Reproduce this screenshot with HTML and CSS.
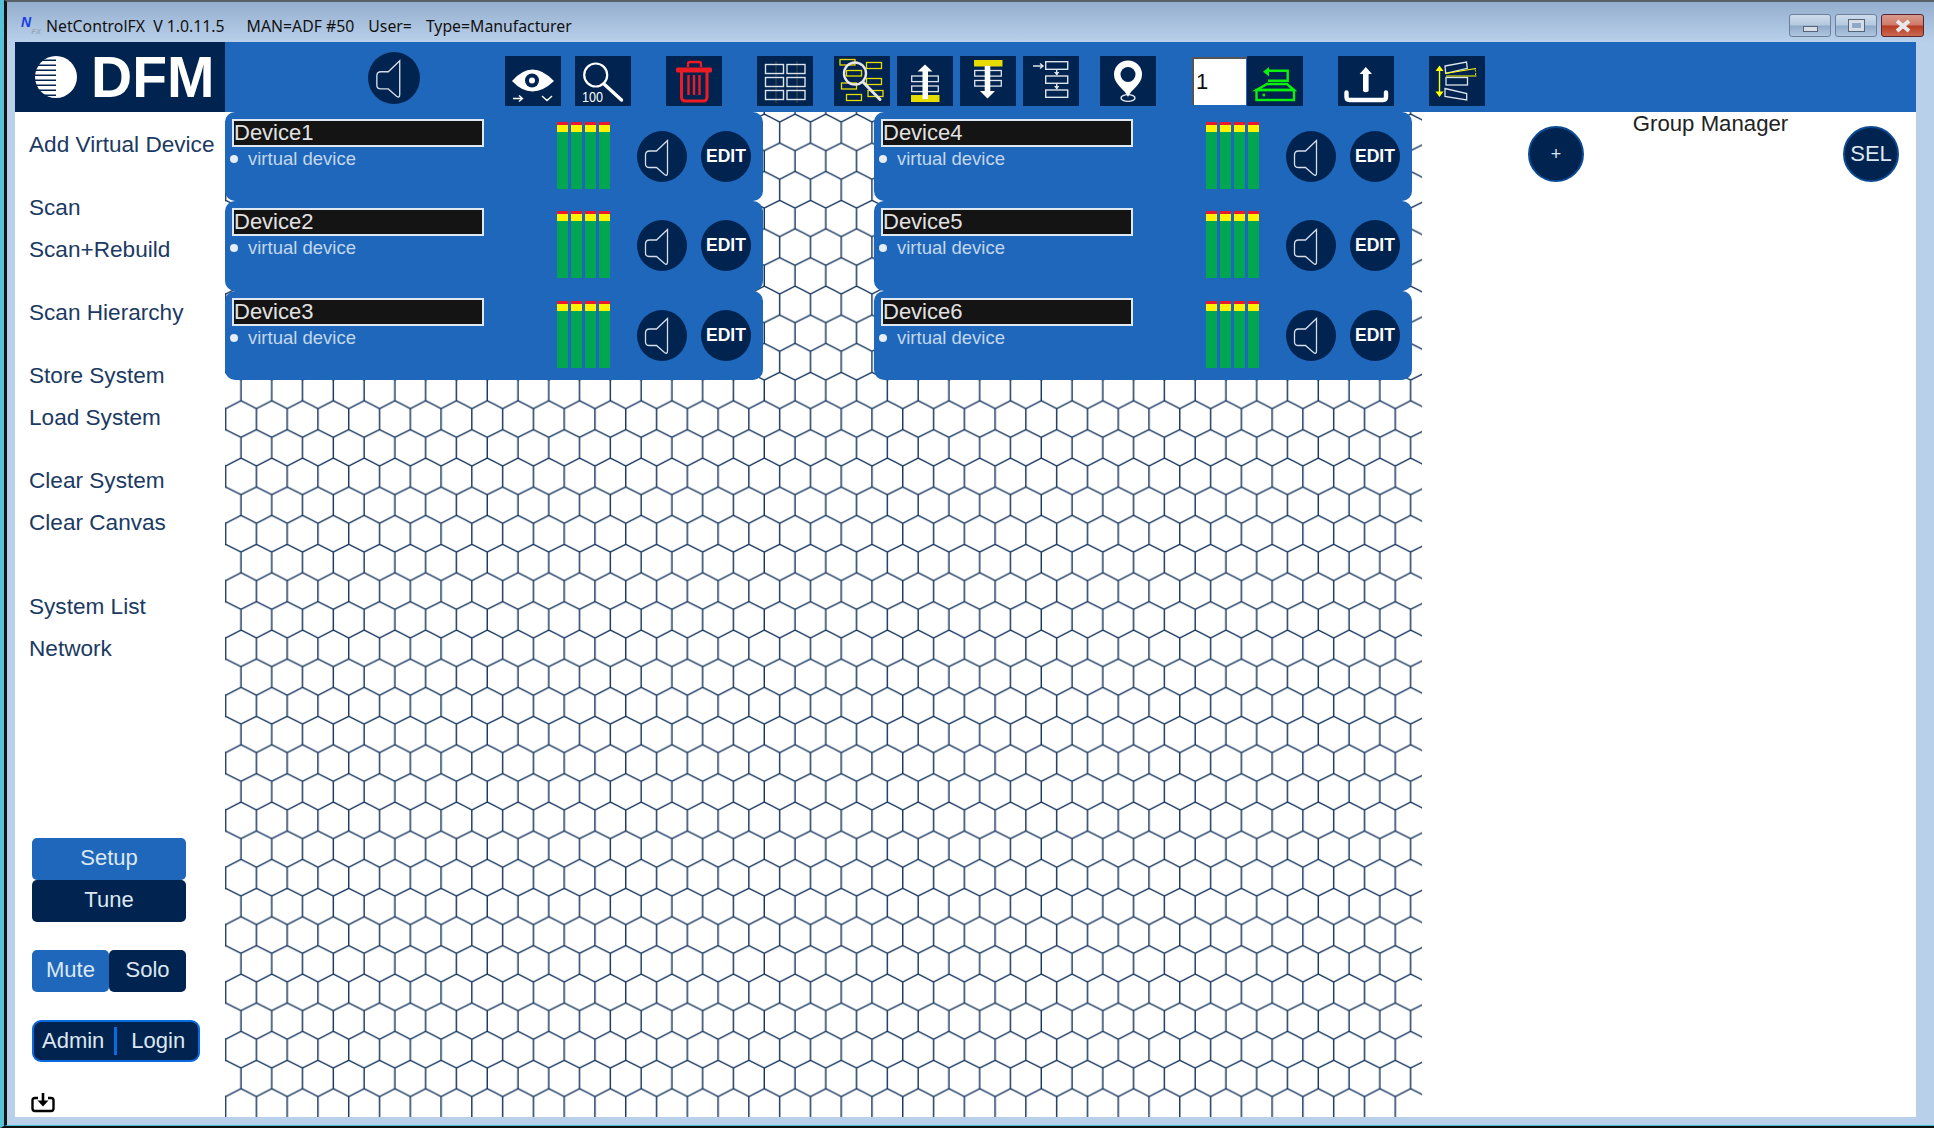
FILE: index.html
```html
<!DOCTYPE html>
<html lang="en">
<head>
  <meta charset="UTF-8" />
  <title>NetControlFX</title>
  <link rel="stylesheet" href="styles.css">
</head>
<body>
  <!-- shared icon shapes -->
  <svg class="defs" width="0" height="0">
    <symbol id="speaker" viewBox="0 0 50 50">
      <path d="M30.5 8.5 L19.5 19 H12.5 Q8.5 19 8.5 23 V32 Q8.5 35.5 12.5 35.5 H19.5 L27.5 42.5 Q30.5 44.5 30.5 41 Z" fill="none" stroke="#d5deea" stroke-width="1.3" />
    </symbol>
    <symbol id="meter" viewBox="0 0 11 67">
      <rect width="11" height="3" fill="#e8192c" />
      <rect y="3" width="11" height="7" fill="#fff200" />
      <rect y="10" width="11" height="57" fill="#00a651" />
    </symbol>
  </svg>

  <div class="window">
    <!-- Title bar -->
    <div class="titlebar">
      <div class="title">
        <svg class="appicon" width="21" height="22" viewBox="0 0 21 22">
          <text x="0" y="13" class="appicon-n">N</text>
          <text x="10.5" y="20" class="appicon-fx">FX</text>
        </svg>
        <span class="t1">NetControlFX&nbsp; V 1.0.11.5</span>
        <span class="t2">MAN=ADF #50</span>
        <span class="t3">User=</span>
        <span class="t3">Type=Manufacturer</span>
      </div>
      <div class="winbtns">
        <div class="winbtn"><span class="ico-min"></span></div>
        <div class="winbtn"><span class="ico-max"></span></div>
        <div class="winbtn close"><svg width="22" height="14" viewBox="0 0 22 14"><path d="M5 2 L17 12 M17 2 L5 12" stroke="#e8e8ea" stroke-width="4" /></svg></div>
      </div>
    </div>

    <div class="main">
      <!-- Toolbar -->
      <div class="toolbar">
        <div class="logo">
          <svg width="44" height="44" viewBox="0 0 44 44">
            <clipPath id="disc"><circle cx="22" cy="22" r="21" /></clipPath>
            <g clip-path="url(#disc)" fill="#fff">
              <rect x="22" y="0" width="22" height="44" />
              <rect x="0" y="1" width="22" height="3.5" />
              <rect x="0" y="6" width="22" height="3.5" />
              <rect x="0" y="11" width="22" height="3.5" />
              <rect x="0" y="16" width="22" height="3.5" />
              <rect x="0" y="21" width="22" height="3.5" />
              <rect x="0" y="26" width="22" height="3.5" />
              <rect x="0" y="31" width="22" height="3.5" />
              <rect x="0" y="36" width="22" height="3.5" />
              <rect x="0" y="41" width="22" height="3" />
            </g>
          </svg>
          <span class="logo-text">DFM</span>
        </div>
        <div class="round top-speaker"><svg width="52" height="52"><use href="#speaker" /></svg></div>

        <!-- eye -->
        <div class="tool first">
          <svg width="56" height="50" viewBox="0 0 56 50">
            <path d="M7 25 Q27 2 49 25 Q27 46 7 25 Z" fill="#fff" />
            <circle cx="27" cy="24.5" r="7" fill="#00234f" />
            <circle cx="27" cy="24.5" r="3" fill="#fff" />
            <path d="M8 42.5 H17 M14 39.5 L17.5 42.5 L14 45.5 M37 40 L42 44.5 L47 40" fill="none" stroke="#fff" stroke-width="1.4" />
          </svg>
        </div>
        <!-- search 100 -->
        <div class="tool g14">
          <svg width="56" height="50" viewBox="0 0 56 50">
            <circle cx="20.7" cy="19" r="11.5" fill="none" stroke="#fff" stroke-width="2.2" />
            <path d="M29 28 L46.5 44" stroke="#fff" stroke-width="3.4" stroke-linecap="round" />
            <text x="7" y="46" class="tool-num" textLength="21" lengthAdjust="spacingAndGlyphs">100</text>
          </svg>
        </div>
        <!-- trash -->
        <div class="tool g35">
          <svg width="56" height="50" viewBox="0 0 56 50">
            <path d="M22 11 V8 Q22 6 24 6 H33 Q35 6 35 8 V11" fill="none" stroke="#ed1c24" stroke-width="2.4" />
            <rect x="10" y="11.5" width="36" height="5" rx="1.5" fill="#ed1c24" />
            <path d="M15.5 16 V41 Q15.5 45 19.5 45 H37 Q41 45 41 41 V16" fill="none" stroke="#ed1c24" stroke-width="3" />
            <path d="M22.5 19 V39 M28 19 V39 M33.5 19 V39" stroke="#ed1c24" stroke-width="2.4" />
          </svg>
        </div>
        <!-- grid -->
        <div class="tool g35">
          <svg width="56" height="50" viewBox="0 0 56 50">
            <path d="M19 5 V47 M40 5 V47" stroke="#4a4a48" stroke-width="1" />
            <g fill="none" stroke="#dde3ea" stroke-width="1.4">
              <rect x="8.5" y="8.5" width="18" height="9" />
              <rect x="30" y="8.5" width="18" height="9" />
              <rect x="8.5" y="21.5" width="18" height="9" />
              <rect x="30" y="21.5" width="18" height="9" />
              <rect x="8.5" y="34.5" width="18" height="9" />
              <rect x="30" y="34.5" width="18" height="9" />
            </g>
          </svg>
        </div>
        <!-- find in yellow blocks -->
        <div class="tool g21">
          <svg width="56" height="50" viewBox="0 0 56 50">
            <g fill="none" stroke="#e6dc00" stroke-width="1.3">
              <rect x="6" y="3.5" width="15" height="5.5" />
              <rect x="32.5" y="6.5" width="15" height="6" />
              <rect x="12.5" y="14.5" width="15" height="5.5" />
              <rect x="32.5" y="22.5" width="15" height="6" />
              <rect x="7.5" y="27" width="15" height="6" />
              <rect x="34" y="34.5" width="15" height="6" />
              <rect x="12.5" y="38.5" width="15" height="6" />
            </g>
            <circle cx="21" cy="17.5" r="11" fill="none" stroke="#e6e6e6" stroke-width="2.4" />
            <path d="M29 26 L46 43.5" stroke="#e6e6e6" stroke-width="3" stroke-linecap="round" />
          </svg>
        </div>
        <!-- move up -->
        <div class="tool g7">
          <svg width="56" height="50" viewBox="0 0 56 50">
            <rect x="14" y="39" width="28.5" height="7" fill="#e6dc00" />
            <rect x="14.7" y="20" width="26.6" height="5.6" fill="none" stroke="#dde3ea" stroke-width="1.3" />
            <rect x="14.7" y="30" width="26.6" height="5.6" fill="none" stroke="#dde3ea" stroke-width="1.3" />
            <path d="M28 8.5 L35.5 15.5 H31 V43 H25.5 V15.5 H20.5 Z" fill="#fff" />
          </svg>
        </div>
        <!-- move down -->
        <div class="tool g7">
          <svg width="56" height="50" viewBox="0 0 56 50">
            <rect x="14" y="4" width="28.5" height="6.5" fill="#e6dc00" />
            <rect x="14.7" y="14.5" width="26.6" height="5.6" fill="none" stroke="#dde3ea" stroke-width="1.3" />
            <rect x="14.7" y="24.5" width="26.6" height="5.6" fill="none" stroke="#dde3ea" stroke-width="1.3" />
            <path d="M27.5 42.5 L20 35 H24.7 V10 H30.3 V35 H35 Z" fill="#fff" />
          </svg>
        </div>
        <!-- flow -->
        <div class="tool g7">
          <svg width="56" height="50" viewBox="0 0 56 50">
            <g fill="none" stroke="#dde3ea" stroke-width="1.4">
              <rect x="22.7" y="5.7" width="22" height="7.6" />
              <rect x="22.7" y="20" width="22" height="7.3" />
              <rect x="22.7" y="34" width="22" height="7.3" />
              <path d="M10 10 H20 M17 7.5 L20 10 L17 12.5" />
              <path d="M33.7 13.5 V19 M33.7 27.5 V33" />
            </g>
            <path d="M31 16 H36.4 L33.7 19.5 Z M31 30 H36.4 L33.7 33.5 Z" fill="#dde3ea" />
          </svg>
        </div>
        <!-- pin -->
        <div class="tool g21">
          <svg width="56" height="50" viewBox="0 0 56 50">
            <ellipse cx="28" cy="42" rx="7" ry="3.4" fill="none" stroke="#e8ecf2" stroke-width="1.4" />
            <path d="M28 41 C25 33 14 29 14 18.5 A14 14 0 0 1 42 18.5 C42 29 31 33 28 41 Z" fill="#fff" />
            <circle cx="28" cy="18.5" r="7.5" fill="#00234f" />
          </svg>
        </div>
        <div class="group-num">1</div>
        <!-- green return -->
        <div class="tool g1">
          <svg width="56" height="50" viewBox="0 0 56 50">
            <g fill="none" stroke="#0df00d" stroke-width="2.4">
              <path d="M20 14.7 H40.7 V24.7 H21" />
              <path d="M20 28 H40 L47 34 H9.5 Z" />
              <rect x="9.5" y="34" width="37.5" height="10" />
            </g>
            <path d="M16 15.7 L22 11 V20.5 Z" fill="#0df00d" />
            <rect x="15.5" y="37.7" width="2.6" height="2.6" fill="#0df00d" />
          </svg>
        </div>
        <!-- upload -->
        <div class="tool g35">
          <svg width="56" height="50" viewBox="0 0 56 50">
            <path d="M27.8 11 L34 18 H30.6 V35 Q27.8 37.5 25 35 V18 H21.6 Z" fill="#fff" />
            <path d="M8.5 36.5 V41 Q8.5 44 11.5 44 H45 Q48 44 48 41 V36.5" fill="none" stroke="#fff" stroke-width="4.4" stroke-linecap="round" />
          </svg>
        </div>
        <!-- arrange -->
        <div class="tool g35">
          <svg width="56" height="50" viewBox="0 0 56 50">
            <path d="M10.5 13 V37" stroke="#ffff00" stroke-width="1.4" />
            <path d="M10.5 9.5 L14.5 15 H6.5 Z M10.5 41 L14.5 35.5 H6.5 Z" fill="#ffff00" />
            <g fill="none" stroke="#dde3ea" stroke-width="1.3">
              <path d="M16 10 L37.5 6 L38.3 12.3 L16.7 17.5 Z" />
              <rect x="17" y="21.5" width="21.5" height="7.5" />
              <path d="M16 32.5 L37.7 37.5 V44 L16 40.5 Z" />
            </g>
            <path d="M16 17.5 L47 12.5 M17 20 H47.5" stroke="#ffff00" stroke-width="1.2" />
            <path d="M46 13.5 Q47.5 17 46 20" fill="none" stroke="#ffff00" stroke-width="1" stroke-dasharray="2 1.5" />
          </svg>
        </div>
      </div>

      <div class="content">
        <!-- Side menu -->
        <div class="sidebar">
          <div class="menu">
            <div class="item">Add Virtual Device</div>
            <div class="item sep">Scan</div>
            <div class="item">Scan+Rebuild</div>
            <div class="item sep">Scan Hierarchy</div>
            <div class="item sep">Store System</div>
            <div class="item">Load System</div>
            <div class="item sep">Clear System</div>
            <div class="item">Clear Canvas</div>
            <div class="item sep-big">System List</div>
            <div class="item">Network</div>
          </div>
          <div class="controls">
            <div class="btn wide blue">Setup</div>
            <div class="btn wide dark">Tune</div>
            <div class="pair">
              <div class="btn half blue">Mute</div>
              <div class="btn half dark">Solo</div>
            </div>
            <div class="admin">
              <span>Admin</span>
              <span class="divider"></span>
              <span>Login</span>
            </div>
            <svg class="saveicon" width="24" height="21" viewBox="0 0 24 21">
              <path d="M7 6 H4 Q1.5 6 1.5 8.5 V16.5 Q1.5 19 4 19 H20 Q22.5 19 22.5 16.5 V8.5 Q22.5 6 20 6 H17" fill="none" stroke="#000" stroke-width="2.4" />
              <path d="M12 1 V11" stroke="#000" stroke-width="2.6" />
              <path d="M6.5 8.5 H17.5 L12 14.5 Z" fill="#000" />
            </svg>
          </div>
        </div>

        <!-- Canvas -->
        <div class="canvas">
          <svg class="hex" width="100%" height="100%">
            <pattern id="hexcell" width="30.78" height="57.33" patternUnits="userSpaceOnUse" patternTransform="translate(-7.1 0)">
              <path d="M23.1 0 V2 L7.7 10 V31 L23.1 38.7 V57.33 M23.1 2 L38.48 10 M23.1 38.7 L38.48 31 M-7.68 2 L7.7 10 M-7.68 38.7 L7.7 31" fill="none" stroke="#0f3058" stroke-width="1.4" />
            </pattern>
            <rect width="100%" height="100%" fill="url(#hexcell)" />
          </svg>
          <div class="devices">
            <div class="device">
              <div class="info"><div class="name">Device1</div><div class="status">virtual device</div></div>
              <div class="meters"><svg><use href="#meter" /></svg><svg><use href="#meter" /></svg><svg><use href="#meter" /></svg><svg><use href="#meter" /></svg></div>
              <div class="round spk"><svg width="50" height="50"><use href="#speaker" /></svg></div>
              <div class="round edit">EDIT</div>
            </div>
            <div class="device">
              <div class="info"><div class="name">Device4</div><div class="status">virtual device</div></div>
              <div class="meters"><svg><use href="#meter" /></svg><svg><use href="#meter" /></svg><svg><use href="#meter" /></svg><svg><use href="#meter" /></svg></div>
              <div class="round spk"><svg width="50" height="50"><use href="#speaker" /></svg></div>
              <div class="round edit">EDIT</div>
            </div>
            <div class="device">
              <div class="info"><div class="name">Device2</div><div class="status">virtual device</div></div>
              <div class="meters"><svg><use href="#meter" /></svg><svg><use href="#meter" /></svg><svg><use href="#meter" /></svg><svg><use href="#meter" /></svg></div>
              <div class="round spk"><svg width="50" height="50"><use href="#speaker" /></svg></div>
              <div class="round edit">EDIT</div>
            </div>
            <div class="device">
              <div class="info"><div class="name">Device5</div><div class="status">virtual device</div></div>
              <div class="meters"><svg><use href="#meter" /></svg><svg><use href="#meter" /></svg><svg><use href="#meter" /></svg><svg><use href="#meter" /></svg></div>
              <div class="round spk"><svg width="50" height="50"><use href="#speaker" /></svg></div>
              <div class="round edit">EDIT</div>
            </div>
            <div class="device">
              <div class="info"><div class="name">Device3</div><div class="status">virtual device</div></div>
              <div class="meters"><svg><use href="#meter" /></svg><svg><use href="#meter" /></svg><svg><use href="#meter" /></svg><svg><use href="#meter" /></svg></div>
              <div class="round spk"><svg width="50" height="50"><use href="#speaker" /></svg></div>
              <div class="round edit">EDIT</div>
            </div>
            <div class="device">
              <div class="info"><div class="name">Device6</div><div class="status">virtual device</div></div>
              <div class="meters"><svg><use href="#meter" /></svg><svg><use href="#meter" /></svg><svg><use href="#meter" /></svg><svg><use href="#meter" /></svg></div>
              <div class="round spk"><svg width="50" height="50"><use href="#speaker" /></svg></div>
              <div class="round edit">EDIT</div>
            </div>
          </div>
        </div>

        <!-- Group manager -->
        <div class="groups">
          <div class="groups-title">Group Manager</div>
          <div class="groups-btns">
            <div class="round gbtn plus">+</div>
            <div class="round gbtn">SEL</div>
          </div>
        </div>
      </div>
    </div>
  </div>
</body>
</html>
```
FILE: styles.css
```css
/* ---------- Base ---------- */
*, *::before, *::after { box-sizing: border-box; margin: 0; padding: 0; }
html, body { height: 100%; }
body {
  font-family: "Liberation Sans", Arial, sans-serif;
  background: #111;
  border-left: 4px solid #58c3d8;
  border-bottom: 2px solid #111;
  overflow: hidden;
}
.defs { position: absolute; }

/* ---------- Window frame ---------- */
.window {
  height: 1126px;
  border-left: 3px solid #141414;
  border-top: 2px solid #5a6068;
  border-bottom: 1px solid #3cc0d0;
  background: linear-gradient(#93aecd, #b9d0ea 40px);
  display: flex;
  flex-direction: column;
}
.titlebar { height: 40px; display: flex; justify-content: space-between; flex-shrink: 0; }
.title {
  display: flex;
  align-items: center;
  height: 40px;
  padding: 8px 0 0 14px;
  font-family: "Noto Sans", sans-serif;
  font-size: 15.8px;
  color: #111;
  white-space: nowrap;
}
.appicon { margin: -2px 4px 0 0; }
.appicon-n { font: italic bold 14px "Liberation Sans", sans-serif; fill: #1a3fe0; }
.appicon-fx { font: italic bold 7.5px "Liberation Sans", sans-serif; fill: #9aa7b8; }
.t2 { margin-left: 22px; }
.t3 { margin-left: 14px; }

.winbtns { display: flex; gap: 4px; margin: 12px 10px 0 0; height: 23px; }
.winbtn {
  width: 42px;
  border: 1px solid #6f7f99;
  border-radius: 3px;
  background: linear-gradient(#cfdcec 0, #b4c8df 48%, #8fa9c8 52%, #afc6e0 100%);
  display: flex;
  align-items: center;
  justify-content: center;
}
.winbtn.close {
  width: 43px;
  border-color: #5a2430;
  background: linear-gradient(#d99a8c 0, #cf7a68 48%, #b83a22 52%, #c96a50 100%);
}
.ico-min { width: 15px; height: 6px; margin-top: 6px; background: #d6dde6; border: 1px solid #56647a; }
.ico-max { width: 15px; height: 11px; background: #8fa9c8; border: 3px solid #d6dde6; outline: 1px solid #56647a; }

.main {
  flex: 1;
  margin: 0 18px 8px 8px;
  display: flex;
  flex-direction: column;
  min-height: 0;
}

/* ---------- Toolbar ---------- */
.toolbar { height: 70px; background: #1e67ba; display: flex; align-items: flex-start; flex-shrink: 0; }
.logo {
  width: 210px;
  height: 70px;
  background: #00234f;
  display: flex;
  align-items: center;
  padding-left: 19px;
  color: #fff;
}
.logo-text { font-size: 57px; font-weight: bold; margin-left: 13px; line-height: 70px; }
.round {
  border-radius: 50%;
  background: #00234f;
  display: flex;
  align-items: center;
  justify-content: center;
  flex-shrink: 0;
}
.top-speaker { width: 52px; height: 52px; margin: 10px 0 0 143px; }
.tool { width: 56px; height: 50px; margin-top: 14px; background: #00234f; flex-shrink: 0; }
.tool svg { display: block; }
.tool-num { font: 15px "Liberation Sans", sans-serif; fill: #fff; }
.first { margin-left: 85px; }
.g1 { margin-left: 1px; }
.g7 { margin-left: 7px; }
.g14 { margin-left: 14px; }
.g21 { margin-left: 21px; }
.g35 { margin-left: 35px; }
.group-num {
  width: 54px;
  height: 48px;
  margin: 15px 0 0 36px;
  background: #fff;
  border-top: 2px solid #555;
  border-left: 2px solid #555;
  padding-left: 2px;
  font-size: 22px;
  line-height: 46px;
  color: #111;
}

/* ---------- Content ---------- */
.content { flex: 1; display: flex; min-height: 0; background: #fff; }

/* ---------- Side menu ---------- */
.sidebar { width: 210px; flex-shrink: 0; display: flex; flex-direction: column; }
.menu { padding: 11.5px 0 0 14px; color: #1b3a63; font-size: 22.6px; }
.item { height: 42px; line-height: 42px; white-space: nowrap; }
.sep { margin-top: 21px; }
.sep-big { margin-top: 42px; }

.controls { margin-top: auto; padding: 0 0 4px 17px; }
.btn {
  height: 42px;
  border-radius: 5px;
  color: #dde7f2;
  font-size: 22px;
  line-height: 40px;
  text-align: center;
}
.wide { width: 154px; }
.half { width: 77px; }
.blue { background: #1e67ba; }
.dark { background: #00234f; }
.pair { display: flex; margin-top: 28px; }
.admin {
  width: 168px;
  height: 42px;
  margin-top: 28px;
  background: #00234f;
  border: 2px solid #0a6be0;
  border-radius: 9px;
  color: #dde7f2;
  font-size: 22px;
  display: flex;
  align-items: center;
  gap: 9px;
  padding-left: 8px;
}
.divider { width: 3px; height: 28px; margin: 0 5px 0 1px; background: #0a6be0; }
.saveicon { display: block; margin-top: 30px; margin-left: -1px; }

/* ---------- Canvas ---------- */
.canvas { width: 1197px; flex-shrink: 0; position: relative; overflow: hidden; }
.hex { position: absolute; top: 0; left: 0; }
.devices {
  position: relative;
  display: grid;
  grid-template-columns: 538px 538px;
  column-gap: 111px;
}
.device {
  height: 89.4px;
  background: #1e67ba;
  border-radius: 10px;
  display: flex;
  align-items: flex-start;
  padding: 7px 11px 0 7px;
}
.info { width: 252px; flex-shrink: 0; }
.name {
  height: 28px;
  background: #141414;
  border: 2px solid #dfe7f0;
  color: #e2e2e2;
  font-size: 22px;
  line-height: 23px;
}
.status {
  position: relative;
  padding-left: 16px;
  font-size: 18.5px;
  line-height: 24px;
  color: #c3d7ee;
}
.status::before {
  content: "";
  position: absolute;
  left: -2px;
  top: 8px;
  width: 8px;
  height: 8px;
  border-radius: 50%;
  background: #e6edf5;
}
.meters { display: flex; gap: 3px; margin: 3px 0 0 73px; }
.meters svg { width: 11px; height: 67px; display: block; }
.spk { width: 50px; height: 51px; margin: 12px 0 0 27px; }
.edit {
  width: 50px;
  height: 51px;
  margin: 12px 0 0 14px;
  color: #fff;
  font-size: 17.5px;
  font-weight: bold;
}

/* ---------- Group manager ---------- */
.groups { flex: 1; padding: 0 17px 0 106px; }
.groups-title { text-align: center; font-size: 22.2px; line-height: 24px; color: #222; padding-right: 6px; }
.groups-btns { display: flex; justify-content: space-between; margin-top: -10px; }
.gbtn {
  width: 56px;
  height: 56px;
  background: #00234f;
  border: 2px solid #0d4a94;
  color: #dde7f2;
  font-size: 22px;
}
.plus { font-size: 18px; }
```
